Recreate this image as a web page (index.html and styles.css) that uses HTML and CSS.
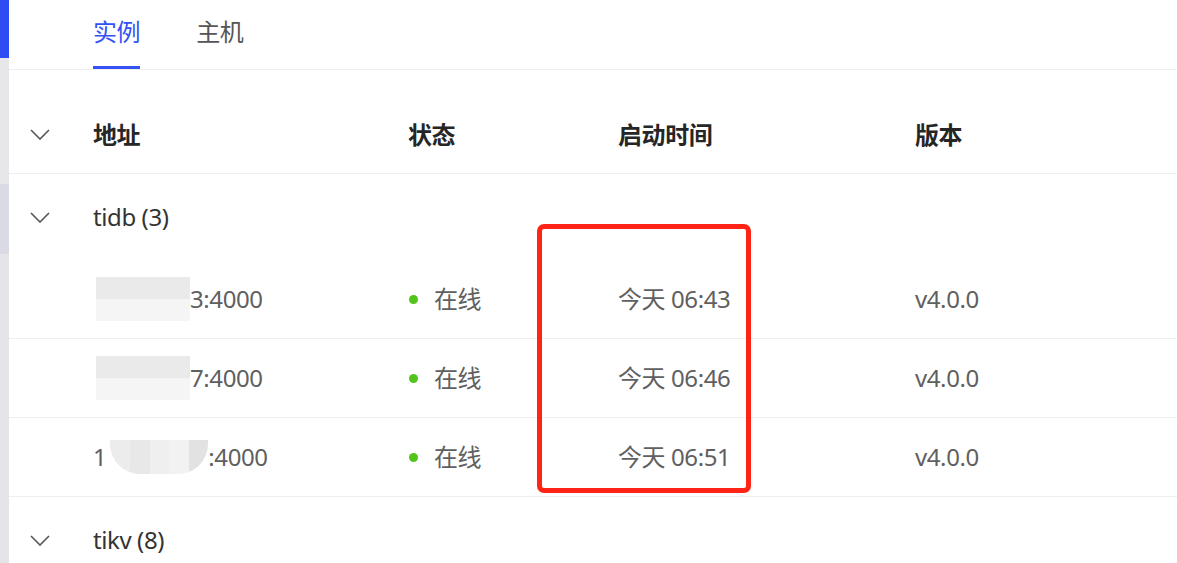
FILE: index.html
```html
<!DOCTYPE html>
<html lang="zh-CN">
<head>
    <meta charset="UTF-8">
    <title>集群信息</title>
    <link rel="stylesheet" href="styles.css">
</head>
<body>

<div class="layout">
    <aside class="side-strip">
        <div class="strip-active"></div>
        <div class="strip-top"></div>
        <div class="strip-hover"></div>
        <div class="strip-rest"></div>
    </aside>

    <main class="content">
        <nav class="tabs">
            <a class="tab active">实例</a>
            <a class="tab">主机</a>
        </nav>

        <div class="table">
            <div class="row head">
                <div class="cell toggle"><svg class="chevron" viewBox="0 0 20 11"><path d="M1 1 L10 10 L19 1"/></svg></div>
                <div class="cell">地址</div>
                <div class="cell">状态</div>
                <div class="cell">启动时间</div>
                <div class="cell">版本</div>
            </div>

            <div class="row group">
                <div class="cell toggle"><svg class="chevron" viewBox="0 0 20 11"><path d="M1 1 L10 10 L19 1"/></svg></div>
                <div class="cell">tidb (3)</div>
            </div>

            <div class="row item">
                <div class="cell"></div>
                <div class="cell addr"><span class="mask wide"><i></i><i></i><i></i><i></i><i></i></span>3:4000</div>
                <div class="cell"><span class="dot"></span>在线</div>
                <div class="cell">今天 06:43</div>
                <div class="cell">v4.0.0</div>
            </div>
            <div class="row item">
                <div class="cell"></div>
                <div class="cell addr"><span class="mask wide"><i></i><i></i><i></i><i></i><i></i></span>7:4000</div>
                <div class="cell"><span class="dot"></span>在线</div>
                <div class="cell">今天 06:46</div>
                <div class="cell">v4.0.0</div>
            </div>
            <div class="row item">
                <div class="cell"></div>
                <div class="cell addr">1<span class="mask round"><i></i><i></i><i></i><i></i><i></i></span>:4000</div>
                <div class="cell"><span class="dot"></span>在线</div>
                <div class="cell">今天 06:51</div>
                <div class="cell">v4.0.0</div>
            </div>

            <div class="row group">
                <div class="cell toggle"><svg class="chevron" viewBox="0 0 20 11"><path d="M1 1 L10 10 L19 1"/></svg></div>
                <div class="cell">tikv (8)</div>
            </div>
        </div>
    </main>
</div>

<!-- highlight box drawn over the start time column -->
<div class="highlight"></div>

</body>
</html>
```

FILE: styles.css
```css
body {
    margin: 0;
    padding: 0;
    background-color: white;
    font-family: "Noto Sans", "Noto Sans CJK SC", sans-serif;
    font-size: 24px;
    letter-spacing: -0.4px;
    color: #606060;
    overflow: hidden;
}
.layout {
    display: flex;
    height: 563px;
}
.side-strip {
    width: 9px;
    display: flex;
    flex-direction: column;
    flex-shrink: 0;
}
.strip-active {
    height: 58px;
    background-color: #2f4cf4;
}
.strip-top {
    height: 126px;
    background-color: #e7e7e9;
}
.strip-hover {
    height: 70px;
    background-color: #d9dae3;
}
.strip-rest {
    flex: 1;
    background-color: #e4e4e9;
}
.content {
    flex: 1;
}
.tabs {
    display: flex;
    gap: 56px;
    padding-left: 84px;
    height: 69px;
    border-bottom: 1px solid #efefef;
    box-sizing: content-box;
}
.tab {
    display: flex;
    align-items: center;
    height: 69px;
    box-sizing: border-box;
    padding-bottom: 3px;
    border-bottom: 3px solid transparent;
    color: #555;
    line-height: 1;
}
.tab.active {
    color: #3351f4;
    border-bottom-color: #3351f4;
}
.table {
    margin-top: 26px;
}
.row {
    display: grid;
    grid-template-columns: 84px 315px 210px 297px 1fr;
    align-items: center;
    border-bottom: 1px solid #efefef;
}
.row.head {
    height: 77px;
    font-weight: bold;
    color: #262626;
}
.row.group {
    height: 86px;
    border-bottom: none;
    color: #333;
}
.row.item {
    height: 78px;
}
.cell {
    display: flex;
    align-items: center;
    white-space: nowrap;
    line-height: 1;
}
.toggle {
    padding-left: 21px;
}
.chevron {
    width: 20px;
    height: 11px;
    fill: none;
    stroke: #555;
    stroke-width: 1.6;
}
.dot {
    width: 9px;
    height: 9px;
    border-radius: 50%;
    background-color: #52c41a;
    margin: 0 16px 0 1px;
}
.mask {
    display: inline-flex;
    height: 44px;
    margin: -10px 0;
}
.mask.wide {
    width: 94px;
    margin-left: 3px;
}
.mask.round {
    width: 98px;
    height: 34px;
    margin-left: 4px;
    border-radius: 0 0 30px 30px;
    overflow: hidden;
}
.mask i {
    flex: 1;
    background-color: #ececec;
}
.mask i:nth-child(2) {
    background-color: #e8e8e8;
}
.mask i:nth-child(3) {
    background-color: #efefef;
}
.mask i:nth-child(4) {
    background-color: #f2f2f2;
}
.mask i:nth-child(5) {
    background-color: #e2e2e2;
}
.mask.wide i {
    background-image: linear-gradient(#eaeaea 0 50%, #f5f5f5 50% 100%);
}
.highlight {
    position: absolute;
    left: 537px;
    top: 224px;
    width: 204px;
    height: 259px;
    border: 5px solid #ff2416;
    border-radius: 7px;
}
```
